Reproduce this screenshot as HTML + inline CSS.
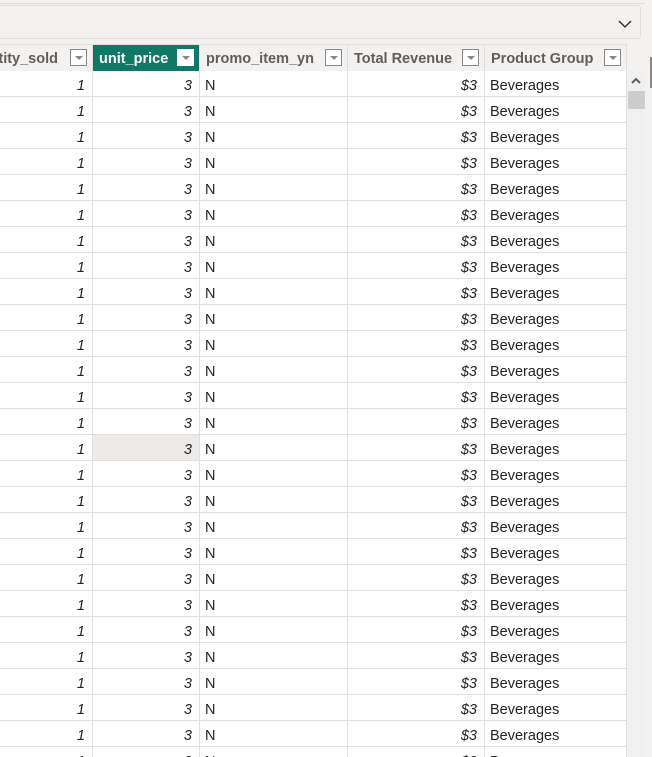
<!DOCTYPE html>
<html><head><style>
body{margin:0;width:652px;height:757px;overflow:hidden;background:#f3f2f1;font-family:"Segoe UI","Liberation Sans",sans-serif;position:relative}
.topline{position:absolute;left:0;top:3px;width:645px;height:1px;background:#e1dfdd}
.fbox{position:absolute;left:-5px;top:5px;width:644px;height:32px;border:1px solid #e1dfdd;border-radius:3px;background:#f3f2f1}
.chev{position:absolute;left:618px;top:19px}
.hdr{position:absolute;top:44px;height:27px;background:#f3f2f1;border-right:1px solid #e1dfdd;border-top:1px solid #e1dfdd;box-sizing:border-box;font-weight:bold;font-size:14.5px;color:#605e5c;line-height:28px;padding-left:6px;white-space:nowrap;overflow:hidden}
.hdr .dd{position:absolute;right:5px;top:4px;width:17px;height:17px;border:1px solid #8a8886;background:#fff;box-sizing:border-box}
.hdr .dd:after{content:"";position:absolute;left:4px;top:6px;border-left:4px solid transparent;border-right:4px solid transparent;border-top:4px solid #8a8886}
.sel{background:#117865;color:#fff}
.sel .dd{border-color:#fff}
.grid{position:absolute;left:0;top:71px;width:627px;height:686px;background:#fff;overflow:hidden}
.row{position:relative;height:26px;border-bottom:1px solid #e1dfdd;box-sizing:border-box;font-size:14.5px;color:#252423}
.c{position:absolute;top:0;height:25px;line-height:30px;border-right:1px solid #e1dfdd;box-sizing:border-box}
.r{text-align:right;padding-right:7px;font-style:italic}
.l{padding-left:5px}
.sb{position:absolute;left:627px;top:71px;width:18px;height:686px;background:#f0f0f0}
.thumb{position:absolute;left:1px;top:20px;width:17px;height:18px;background:#cdcdcd}
.up{position:absolute;left:4px;top:6px}
.edge{position:absolute;left:650px;top:57px;width:2px;height:31px;background:#8a8886}
</style></head><body>
<div class="topline"></div>
<div class="fbox"></div>
<svg class="chev" width="14" height="10" viewBox="0 0 14 10"><path d="M1 2 L7 8 L13 2" fill="none" stroke="#252423" stroke-width="1.3"/></svg>
<div class="hdr" style="left:0;width:93px;padding:0"><span style="position:absolute;right:34px;top:0">quantity_sold</span><span class="dd"></span></div>
<div class="hdr sel" style="left:93px;width:107px;color:#fff">unit_price<span class="dd"></span></div>
<div class="hdr" style="left:200px;width:148px">promo_item_yn<span class="dd"></span></div>
<div class="hdr" style="left:348px;width:137px">Total Revenue<span class="dd"></span></div>
<div class="hdr" style="left:485px;width:142px">Product Group<span class="dd"></span></div>
<div class="grid" id="g"></div>
<div class="sb"><svg class="up" width="10" height="8" viewBox="0 0 10 8"><path d="M1 6 L5 2 L9 6" fill="none" stroke="#605e5c" stroke-width="2"/></svg><div class="thumb"></div></div>
<div class="edge"></div>
<script>
var h='';
for(var i=0;i<27;i++){
var bg=i==14?'background:#edebe9;':'';
h+='<div class="row"><div class="c r" style="left:0;width:93px">1</div><div class="c r" style="left:93px;width:107px;'+bg+'">3</div><div class="c l" style="left:200px;width:148px;font-style:normal">N</div><div class="c r" style="left:348px;width:137px">$3</div><div class="c l" style="left:485px;width:142px">Beverages</div></div>';
}
document.getElementById('g').innerHTML=h;
</script>
</body></html>
